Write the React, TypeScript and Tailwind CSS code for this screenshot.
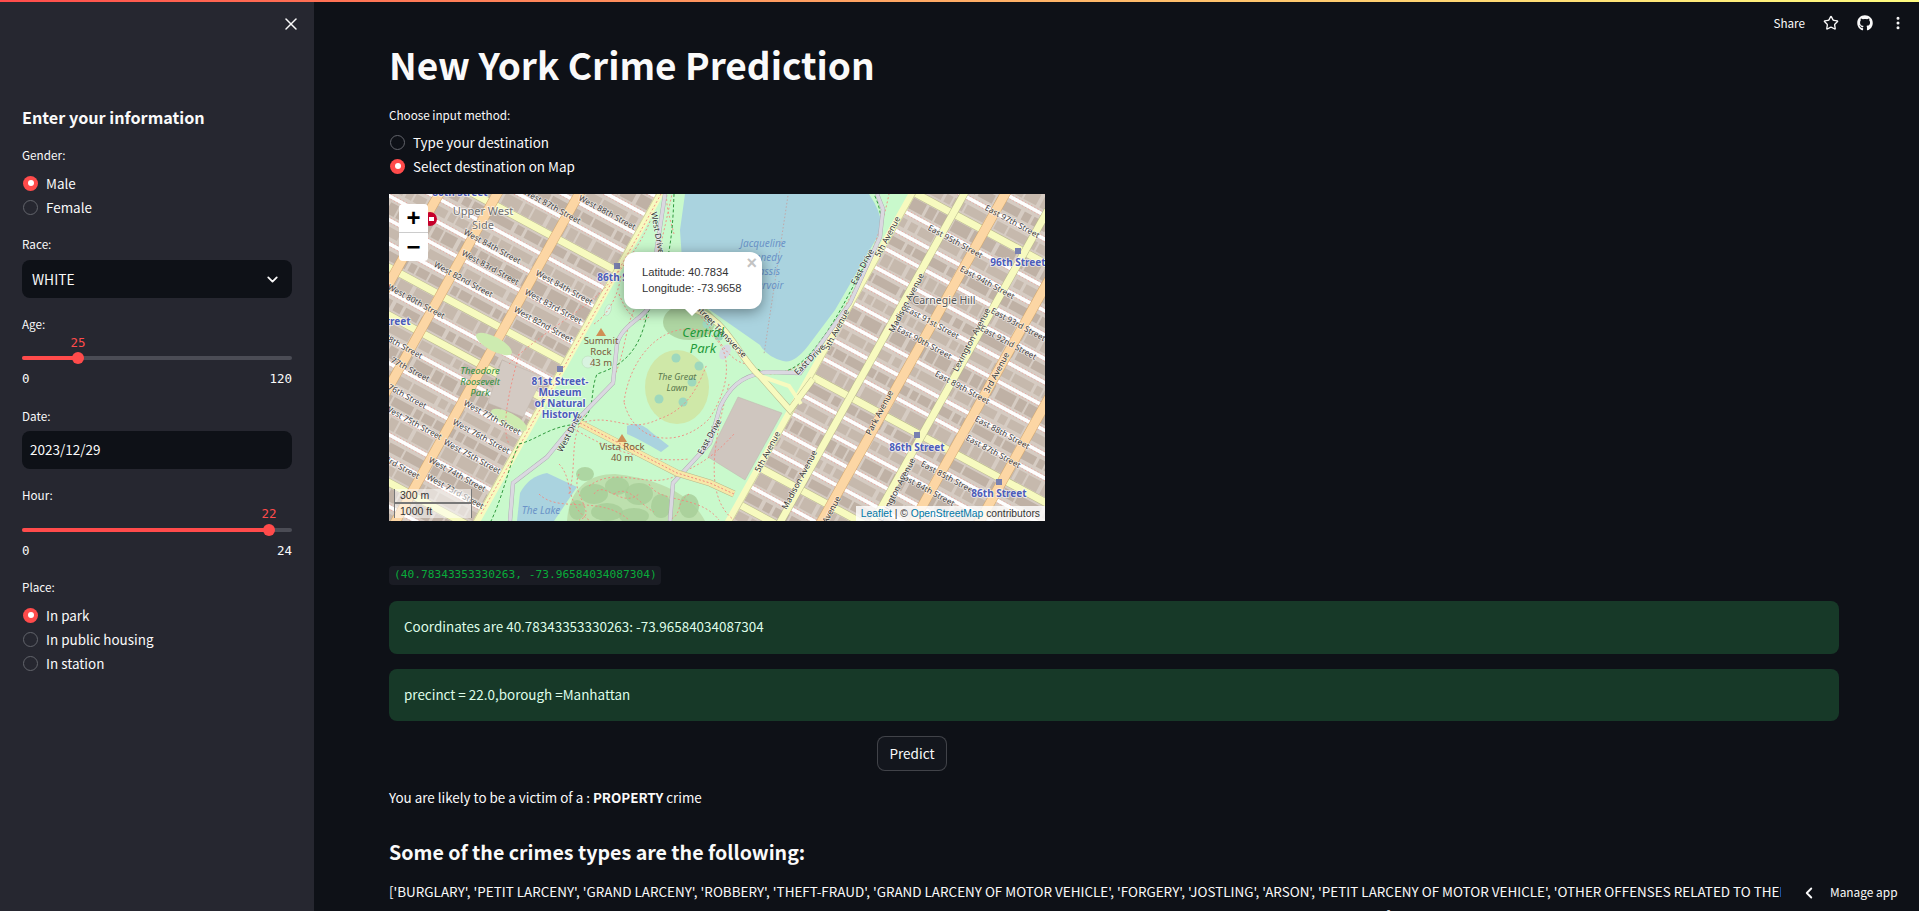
import { ChevronDown, ChevronLeft, EllipsisVertical, Star, X } from "lucide-react";
import { FaGithub } from "react-icons/fa";

const MONO = "font-['DejaVu_Sans_Mono','Liberation_Mono',monospace]";

function Radio({ on, label }: { on?: boolean; label: string }) {
  return (
    <div className="flex h-6 items-center">
      {on ? (
        <span className="ml-px flex h-[15px] w-[15px] items-center justify-center rounded-full bg-[#ff4b4b]">
          <span className="h-[6px] w-[6px] rounded-full bg-white" />
        </span>
      ) : (
        <span className="ml-px h-[15px] w-[15px] rounded-full border border-[#62646b]" />
      )}
      <span className="ml-2 pb-[1px] text-[13.45px] leading-6 text-[#fafafa]">{label}</span>
    </div>
  );
}

function Label({ children, className }: { children: string; className: string }) {
  return <div className={`h-5 text-[11.7px] leading-[19px] text-[#fafafa] ${className}`}>{children}</div>;
}

function Slider({ value, fill, max, valueClass, trackClass }: { value: string; fill: string; max: string; valueClass: string; trackClass: string }) {
  return (
    <div>
      <div className="relative h-[18px]">
        <span className={`absolute top-0 -translate-x-1/2 text-[12.5px] leading-[18px] text-[#ff4b4b] ${MONO} ${valueClass}`}>{value}</span>
      </div>
      <div className={`relative h-1 rounded-full bg-[#4b4c55] ${trackClass}`}>
        <div className={`relative h-1 rounded-full bg-[#ff4b4b] ${fill}`}>
          <span className="absolute -right-[6px] -top-1 h-3 w-3 rounded-full bg-[#ff4b4b]" />
        </div>
      </div>
      <div className={`mt-[9px] flex h-5 justify-between text-[12.5px] leading-5 text-[#fafafa] ${MONO}`}>
        <span>0</span>
        <span>{max}</span>
      </div>
    </div>
  );
}

const SX = 0.54;
const AX = 0.56;
const cOf = (n: number) => -46 + (86 - n) * 23.9;
const streetNums = Array.from({ length: 44 }, (_, i) => 57 + i);
const wide = [96, 86, 81, 79, 72];
const avenues: [number, string][] = [
  [50, "o"], [108, "o"], [190, "o"], [575, "y"], [616, "o"], [668, "y"], [708, "o"], [774, "o"],
];

function StreetLine({ c, ...rest }: { c: number } & React.SVGProps<SVGLineElement>) {
  return <line x1={-20} y1={c - 20 * SX} x2={680} y2={c + 680 * SX} {...rest} />;
}
function AveLine({ x0, ...rest }: { x0: number } & React.SVGProps<SVGLineElement>) {
  return <line x1={x0 + 10 * AX} y1={-10} x2={x0 - 340 * AX} y2={340} {...rest} />;
}

const streetLabels: [string, number, number][] = [
  ["West 87th Street", 163, 13], ["West 88th Street", 218, 19], ["West 84th Street", 103, 53], ["West 83rd Street", 101, 74],
  ["West 82nd Street", 74, 86], ["West 84th Street", 175, 94], ["West 83rd Street", 164, 113], ["West 82nd Street", 154, 131],
  ["West 80th Street", 27, 108], ["78th Street", 14, 153], ["77th Street", 21, 176], ["76th Street", 18, 203],
  ["West 75th Street", 24, 229], ["73rd Street", 11, 273], ["West 77th Street", 103, 224], ["West 76th Street", 92, 243],
  ["West 75th Street", 83, 263], ["West 74th Street", 68, 281], ["West 73rd Street", 66, 298],
  ["East 97th Street", 623, 28], ["East 95th Street", 566, 48], ["East 94th Street", 598, 89], ["East 93rd Street", 629, 131],
  ["East 92nd Street", 619, 149], ["East 91st Street", 543, 129], ["East 90th Street", 535, 149], ["East 89th Street", 573, 194],
  ["East 88th Street", 613, 239], ["East 87th Street", 604, 258], ["East 85th Street", 559, 284], ["East 84th Street", 538, 296],
];
const aveLabels: [string, number, number, number][] = [
  ["5th Avenue", 499, 43, -62], ["5th Avenue", 448, 136, -62], ["5th Avenue", 379, 258, -62],
  ["Madison Avenue", 518, 109, -62], ["Madison Avenue", 411, 286, -62], ["Park Avenue", 491, 219, -62],
  ["Lexington Avenue", 583, 146, -62], ["Lexington Avenue", 508, 296, -62], ["3rd Avenue", 608, 179, -62], ["Avenue", 443, 316, -62],
  ["West Drive", 268, 39, 80], ["West Drive", 181, 239, -62], ["East Drive", 474, 73, -62], ["East Drive", 421, 166, -45],
  ["East Drive", 321, 243, -60], ["Street Transverse", 332, 138, 46],
];
const stations: [number, number][] = [[171, 175], [228, 72], [528, 241], [610, 288], [629, 57]];
const blue: [string, number, number][] = [
  ["81st Street-", 171, 191], ["Museum", 171, 202], ["of Natural", 171, 213], ["History", 171, 224],
  ["86th Street", 236, 87], ["86th Street", 528, 257], ["86th Street", 610, 303], ["96th Street", 629, 72], ["86th Street", 71, 2], ["86th Street", -6, 131],
];
const paths = [
  "M92,320 L250,40 L272,0", "M180,300 C190,262 176,240 205,210 C240,180 232,130 250,108 C262,92 268,70 283,0",
  "M196,228 C225,220 240,240 270,225 C300,215 310,190 318,170", "M235,208 C240,170 265,135 300,135 C340,135 350,180 320,225 C290,255 245,250 235,208",
  "M120,170 C150,140 190,120 215,95 C232,75 250,55 262,25", "M185,235 C210,250 250,270 300,265", "M200,292 C230,270 262,298 290,280 C312,270 325,262 345,240",
  "M150,300 C170,320 210,300 240,326", "M340,190 C330,230 310,300 345,326", "M358,170 C380,192 420,175 440,140 C470,90 490,50 500,0",
  "M285,40 C282,28 276,10 278,0", "M205,130 C220,120 230,100 232,80", "M130,160 C125,180 110,230 120,250", "M230,100 C240,125 250,130 262,122",
  "M260,290 C270,310 310,300 330,326", "M190,280 C180,300 210,320 190,326", "M225,300 C240,290 250,310 265,318", "M205,300 C215,285 232,315 250,300",
  "M170,270 C185,285 175,310 200,326", "M300,300 C285,310 295,320 280,326",
];
const woods: [number, number, number, number][] = [
  [205, 300, 14, 10], [228, 292, 12, 9], [250, 300, 14, 11], [218, 318, 16, 9], [245, 322, 15, 8], [272, 312, 10, 12], [196, 280, 9, 7], [300, 312, 10, 12], [188, 316, 8, 10],
];

function MapDrawing() {
  const label = { fontFamily: "'Noto Sans','DejaVu Sans',sans-serif" };
  return (
    <svg viewBox="0 0 656 327" width="656" height="327" className="block" style={label}>
      <rect width="656" height="327" fill="#d6ccc3" />
      {streetNums.map((n, i) => (
        <StreetLine key={n} c={cOf(n) + 12} stroke={i % 2 ? "#bfb1a5" : "#c6b9ad"} strokeWidth={i % 3 === 0 ? 12 : 9} strokeDasharray={["19 3 9 2 14 4", "12 2 22 3 7 2", "8 3 16 2 27 4"][i % 3]} strokeDashoffset={i * 17} />
      ))}
      {streetNums.map((n) => (
        <g key={n}>
          <StreetLine c={cOf(n)} stroke="#fefefe" strokeWidth={3.6} />
          <StreetLine c={cOf(n) - 2.6} stroke="#f0908a" strokeWidth={0.6} strokeDasharray="1.5 2" />
          <StreetLine c={cOf(n) + 2.6} stroke="#f0908a" strokeWidth={0.6} strokeDasharray="1.5 2" />
        </g>
      ))}
      {wide.map((n) => (
        <g key={n}>
          <StreetLine c={cOf(n)} stroke="#b9b98c" strokeWidth={8} />
          <StreetLine c={cOf(n)} stroke="#f7fabf" strokeWidth={7} />
        </g>
      ))}
      {avenues.map(([x, t]) => (
        <g key={x}>
          <AveLine x0={x} stroke={t === "o" ? "#d3a86e" : "#b9b98c"} strokeWidth={t === "o" ? 10 : 8} />
          <AveLine x0={x} stroke={t === "o" ? "#fcd6a4" : "#f7fabf"} strokeWidth={t === "o" ? 9 : 7} />
        </g>
      ))}
      <polygon points="88,327 271,0 523,0 340,327" fill="#c9f9cc" />
      <AveLine x0={271} stroke="#f7fabf" strokeWidth={7} />
      <AveLine x0={523} stroke="#f7fabf" strokeWidth={7} />
      <AveLine x0={271} stroke="#b9b98c" strokeWidth={0.6} transform="translate(-3.5,0)" />
      <AveLine x0={523} stroke="#b9b98c" strokeWidth={0.6} transform="translate(3.5,0)" />
      {/* woods and lawns */}
      <path d="M178,327 C180,296 198,280 226,280 C262,284 300,296 316,327 Z" fill="#bde0ae" />
      {woods.map(([x, y, rx, ry]) => (
        <ellipse key={x + y} cx={x} cy={y} rx={rx} ry={ry} fill="#a6cd97" opacity={0.8} />
      ))}
      <ellipse cx="288" cy="193" rx="32" ry="37" fill="#cfe8a8" />
      <ellipse cx="300" cy="128" rx="26" ry="18" fill="#a9cf9a" opacity={0.85} />
      <ellipse cx="105" cy="150" rx="20" ry="7" fill="#cdebb0" transform="rotate(28 105 150)" />
      <ellipse cx="120" cy="226" rx="20" ry="7" fill="#cdebb0" transform="rotate(28 120 226)" />
      {[[287, 164], [310, 172], [270, 205], [294, 208], [303, 188], [318, 130], [330, 142]].map(([x, y]) => (
        <circle key={x} cx={x} cy={y} r={4.5} fill="#9ed8bd" />
      ))}
      {/* water */}
      <path d="M296,0 L291,36 L295,95 L318,114 L371,151 Q378,163 394,167 Q405,170 419,152 L446,116 L490,40 Q497,25 480,0 Z" fill="#aad3df" />
      <path d="M128,327 L131,299 Q140,282 158,279 L188,293 L165,327 Z" fill="#aad3df" />
      <path d="M238,232 Q250,226 262,238 L280,252 L272,258 Q250,245 238,240 Z" fill="#aad3df" />
      <ellipse cx="199" cy="168" rx="6" ry="6" fill="#d8f3e0" stroke="#b7d6b5" strokeWidth={0.5} />
      <ellipse cx="219" cy="116" rx="3" ry="6" fill="#d8f3e0" stroke="#b7d6b5" strokeWidth={0.5} transform="rotate(20 219 116)" />
      <ellipse cx="336" cy="158" rx="5" ry="8" fill="#d5dae2" transform="rotate(30 336 158)" />
      {/* buildings in park */}
      <polygon points="113,166 154,183 134,223 99,209" fill="#d3cac3" stroke="#bfb5ad" strokeWidth={0.5} />
      <polygon points="319,263 349,203 393,219 356,286" fill="#cfc6bf" stroke="#bfb5ad" strokeWidth={0.5} />
      {/* footpaths */}
      {paths.map((d) => (
        <path key={d} d={d} fill="none" stroke="#f08a80" strokeWidth={0.9} strokeDasharray="2 2.2" />
      ))}
      <path d="M360,170 C335,170 325,128 300,112" fill="none" stroke="#f08a80" strokeWidth={0.9} strokeDasharray="2 2.2" />
      <path d="M400,-5 L375,160" fill="none" stroke="#bfa9a9" strokeWidth={1} strokeDasharray="1.5 2" />
      {/* bridle path */}
      <path d="M285,0 C284,30 282,80 258,120 C252,150 240,170 208,180 C200,200 208,215 190,230 C160,232 150,245 130,250 C120,270 115,300 102,327" fill="none" stroke="#2f9a3d" strokeWidth={1} strokeDasharray="3 2.2" />
      <path d="M310,118 C330,120 352,168 372,177 C400,185 420,170 452,115 L488,48 C495,30 492,15 485,0" fill="none" stroke="#2f9a3d" strokeWidth={1} strokeDasharray="3 2.2" />
      {/* drives */}
      <path d="M276,0 L268,53 L262,110 C255,125 233,130 228,150 L224,189 L191,223 L158,263 L124,289 L121,327" fill="none" stroke="#a9a7b0" strokeWidth={4.2} />
      <path d="M276,0 L268,53 L262,110 C255,125 233,130 228,150 L224,189 L191,223 L158,263 L124,289 L121,327" fill="none" stroke="#dad8e0" strokeWidth={3.4} />
      <path d="M281,327 L284,289 L321,249 L331,213 C340,195 350,182 378,178 L411,179 L461,109 L491,43 L494,15 L488,0" fill="none" stroke="#a9a7b0" strokeWidth={4.2} />
      <path d="M281,327 L284,289 L321,249 L331,213 C340,195 350,182 378,178 L411,179 L461,109 L491,43 L494,15 L488,0" fill="none" stroke="#dad8e0" strokeWidth={3.4} />
      <path d="M300,115 C335,118 350,165 371,182 L401,216 L424,185" fill="none" stroke="#b9b98c" strokeWidth={6.5} />
      <path d="M300,115 C335,118 350,165 371,182 L401,216 L424,185" fill="none" stroke="#f7fabf" strokeWidth={5.5} />
      <path d="M371,182 L400,192 L412,210" fill="none" stroke="#f7fabf" strokeWidth={4} />
      <path d="M191,229 L288,279 L321,289 L345,300" fill="none" stroke="#b9b98c" strokeWidth={7} />
      <path d="M191,229 L288,279 L321,289 L345,300" fill="none" stroke="#f7e8a8" strokeWidth={6} />
      <path d="M191,229 L288,279 L321,289 L345,300" fill="none" stroke="#f08a80" strokeWidth={1} strokeDasharray="2 2" />
      {/* peaks */}
      <polygon points="212,134 217,142 207,142" fill="#d08f55" />
      <polygon points="233,240 238,248 228,248" fill="#d08f55" />
      {/* subway entrance */}
      <circle cx="41" cy="25" r="7" fill="#c6002b" />
      <rect x="40" y="23" width="5" height="4" fill="#fff" />
      {stations.map(([x, y]) => (
        <rect key={x} x={x - 3} y={y - 3} width="6" height="6" fill="#7981b0" />
      ))}
      {streetLabels.map(([t, x, y], i) => (
        <text key={i} x={x} y={y} fontSize="8.2" fill="#3d3d3d" textAnchor="middle" dominantBaseline="middle" transform={`rotate(28.4 ${x} ${y})`} stroke="#ffffff" strokeOpacity={0.55} strokeWidth={1.6} paintOrder="stroke">{t}</text>
      ))}
      {aveLabels.map(([t, x, y, r], i) => (
        <text key={i} x={x} y={y} fontSize="8.4" fill="#333" textAnchor="middle" dominantBaseline="middle" transform={`rotate(${r} ${x} ${y})`} stroke="#ffffff" strokeOpacity={0.5} strokeWidth={1.4} paintOrder="stroke">{t}</text>
      ))}
      {blue.map(([t, x, y], i) => (
        <text key={i} x={x} y={y} fontSize="10" fontWeight="700" fill="#4c5cba" textAnchor="middle" stroke="#ffffff" strokeOpacity={0.7} strokeWidth={1.6} paintOrder="stroke">{t}</text>
      ))}
      <g fontSize="11" fill="#6f6f6f" textAnchor="middle" stroke="#ffffff" strokeOpacity={0.7} strokeWidth={1.6} paintOrder="stroke">
        <text x="94" y="21">Upper West</text>
        <text x="94" y="35">Side</text>
        <text x="555" y="110" fontSize="10.5" fill="#555">Carnegie Hill</text>
      </g>
      <g fontSize="9.5" fontStyle="italic" fill="#2f8f3f" textAnchor="middle">
        <text x="91" y="180">Theodore</text>
        <text x="91" y="191">Roosevelt</text>
        <text x="91" y="202">Park</text>
      </g>
      <g fontSize="9.5" fill="#7a5a3a" textAnchor="middle">
        <text x="212" y="150">Summit</text>
        <text x="212" y="161">Rock</text>
        <text x="212" y="172">43 m</text>
        <text x="233" y="256">Vista Rock</text>
        <text x="233" y="267">40 m</text>
      </g>
      <g fontSize="9" fontStyle="italic" fill="#5c7a4f" textAnchor="middle">
        <text x="288" y="186">The Great</text>
        <text x="288" y="197">Lawn</text>
      </g>
      <g fontSize="13" fontStyle="italic" fill="#1f9a3a" textAnchor="middle">
        <text x="314" y="143">Central</text>
        <text x="314" y="159">Park</text>
      </g>
      <g fontSize="10" fontStyle="italic" fill="#6a93c8" textAnchor="middle">
        <text x="152" y="320">The Lake</text>
        <text x="374" y="53">Jacqueline</text>
        <text x="374" y="67">Kennedy</text>
        <text x="374" y="81">Onassis</text>
        <text x="374" y="95">Reservoir</text>
      </g>
    </svg>
  );
}

function LeafletMap() {
  const sans = "font-['Liberation_Sans',Arial,sans-serif]";
  return (
    <div className={`relative h-[327px] w-[656px] overflow-hidden ${sans}`}>
      <MapDrawing />
      <div className="absolute left-[10px] top-[10px] w-[29px] overflow-hidden rounded bg-white">
        <div className="flex h-[29px] items-center justify-center border-b border-[#ccc] text-[24px] font-bold leading-none text-black">+</div>
        <div className="flex h-7 items-center justify-center text-[24px] font-bold leading-none text-black">−</div>
      </div>
      <div className="absolute left-[5px] top-[295px] w-[78px]">
        <div className="h-[15px] border-x border-b-2 border-[#777] border-t-0 bg-white/50 pl-[5px] text-[10.5px] leading-[13px] text-[#333]">300 m</div>
        <div className="h-[14px] border-x border-[#777] bg-white/50 pl-[5px] text-[10.5px] leading-[14px] text-[#333]">1000 ft</div>
      </div>
      <div className="absolute bottom-0 right-0 h-[15px] bg-white/80 pl-[5px] pr-[5px] text-[10.3px] leading-[15px] text-[#333]">
        <span className="text-[#0078a8]">Leaflet</span> | © <span className="text-[#0078a8]">OpenStreetMap</span> contributors
      </div>
      <div className="absolute left-[235px] top-[58px] h-[57px] w-[138px] rounded-xl bg-white pl-[18px] pt-[12px] text-[11.2px] leading-4 text-[#333] shadow-[0_3px_14px_rgba(0,0,0,0.4)]">
        <div>Latitude: 40.7834</div>
        <div>Longitude: -73.9658</div>
        <span className="absolute right-[5px] top-[2px] text-[18px] font-bold leading-[18px] text-[#c3c3c3]">×</span>
      </div>
      <div className="absolute left-[296px] top-[115px] h-0 w-0 border-x-[7px] border-t-[7px] border-x-transparent border-t-white" />
    </div>
  );
}

export default function App() {
  return (
    <div className="relative flex h-[911px] w-full overflow-hidden bg-[#0e1117] font-['Noto_Sans_CJK_SC','Liberation_Sans',sans-serif] text-[#fafafa]">
      <div className="absolute inset-x-0 top-0 z-20 h-[2px] bg-gradient-to-r from-[#ff4b4b] to-[#fffd80]" />

      <aside className="relative w-[314px] shrink-0 bg-[#262730] px-[22px] pt-[103px]">
        <X size={20} strokeWidth={1.8} className="absolute left-[281px] top-[14px] text-[#fafafa]" />
        <h2 className="h-7 text-[16.2px] font-semibold leading-7 text-[#fafafa]">Enter your information</h2>
        <Label className="mt-[14px]">Gender:</Label>
        <div className="mt-[6px]">
          <Radio on label="Male" />
          <Radio label="Female" />
        </div>
        <Label className="mt-[15px]">Race:</Label>
        <div className="mt-[6px] flex h-[38px] items-center justify-between rounded-lg bg-[#0e1117] pl-[10px] pr-[11px]">
          <span className="pb-[1px] text-[13.8px] leading-5">WHITE</span>
          <ChevronDown size={17} strokeWidth={2.5} />
        </div>
        <Label className="mt-[16px]">Age:</Label>
        <Slider value="25" fill="w-[56px]" max="120" valueClass="left-[56px]" trackClass="mt-[4px]" />
        <Label className="mt-[17px]">Date:</Label>
        <div className="mt-[5px] flex h-[38px] items-center rounded-lg bg-[#0e1117] pb-[1px] pl-2 text-[13.5px]">2023/12/29</div>
        <Label className="mt-[16px]">Hour:</Label>
        <Slider value="22" fill="w-[247px]" max="24" valueClass="left-[247px]" trackClass="mt-[5px]" />
        <Label className="mt-[16px]">Place:</Label>
        <div className="mt-[6px]">
          <Radio on label="In park" />
          <Radio label="In public housing" />
          <Radio label="In station" />
        </div>
      </aside>

      <main className="relative min-w-0 flex-1 overflow-hidden pl-[75px] pr-[80px] pt-[40px]">
        <h1 className="h-[52px] pb-[3px] text-[37px] font-bold leading-[48px] text-[#fafafa]">New York Crime Prediction</h1>
        <Label className="mt-[13px]">Choose input method:</Label>
        <div className="mt-[5px]">
          <Radio label="Type your destination" />
          <Radio on label="Select destination on Map" />
        </div>
        <div className="mt-[16px]">
          <LeafletMap />
        </div>
        <div className={`mt-[45px] flex h-[19px] w-[272px] items-center whitespace-nowrap rounded bg-[#1a1c24] pl-[5px] text-[11.2px] text-[#09ab3b] ${MONO}`}>
          (40.78343353330263, -73.96584034087304)
        </div>
        <div className="mt-4 flex h-[53px] items-center rounded-lg bg-[#173928] pb-[3px] pl-[15px] text-[13.45px] text-[#dffde9]">
          Coordinates are 40.78343353330263: -73.96584034087304
        </div>
        <div className="mt-[15px] flex h-[52px] items-center rounded-lg bg-[#173928] pb-[2px] pl-[15px] text-[13.45px] text-[#dffde9]">
          precinct = 22.0,borough =Manhattan
        </div>
        <div className="ml-[488px] mt-[15px]">
          <button className="h-[35px] w-[70px] rounded-lg border border-[#fafafa33] bg-[#13161d] pb-[1px] text-[13.5px]">Predict</button>
        </div>
        <p className="mt-[13px] h-[26px] text-[13.4px] leading-[26px]">
          You are likely to be a victim of a : <strong className="font-semibold">PROPERTY</strong> crime
        </p>
        <h3 className="mt-[26px] h-8 text-[19.6px] font-semibold leading-8">Some of the crimes types are the following:</h3>
        <p className="mt-[11px] text-[13.45px] leading-[24px]">
          ['BURGLARY', 'PETIT LARCENY', 'GRAND LARCENY', 'ROBBERY', 'THEFT-FRAUD', 'GRAND LARCENY OF MOTOR VEHICLE', 'FORGERY', 'JOSTLING', 'ARSON', 'PETIT LARCENY OF MOTOR VEHICLE', 'OTHER OFFENSES RELATED TO THEFT', 'POSSESSION OF STOLEN PROPERTY', 'THEFT OF SERVICES', 'UNAUTHORIZED USE OF A VEHICLE', 'CRIMINAL MISCHIEF', 'FRAUDS', 'OFFENSES INVOLVING FRAUD']
        </p>

        <div className="absolute right-0 top-[2px] flex h-[42px] items-center pr-[13px]">
          <span className="mr-[18px] pb-[1px] text-[11.7px]">Share</span>
          <Star size={16} strokeWidth={2} className="mr-[18px]" />
          <FaGithub size={16} className="mr-[17px]" />
          <EllipsisVertical size={16} strokeWidth={2.5} />
        </div>

        <div className="absolute bottom-0 right-0 flex h-[36px] w-[138px] items-center bg-[#0e1117] pl-[19px]">
          <ChevronLeft size={18} strokeWidth={2.5} />
          <span className="ml-[12px] pb-[3px] text-[11.9px]">Manage app</span>
        </div>
      </main>
    </div>
  );
}
